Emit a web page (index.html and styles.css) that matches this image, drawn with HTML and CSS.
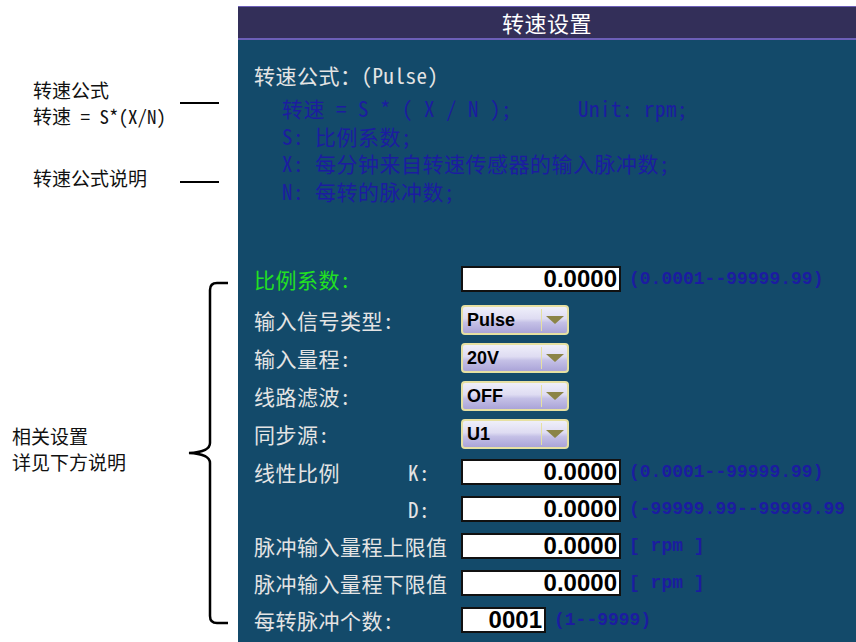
FILE: index.html
```html
<!DOCTYPE html>
<html lang="zh-CN">
<head>
  <meta charset="UTF-8" />
  <title>转速设置</title>
  <link rel="stylesheet" href="styles.css">
</head>
<body>
  <div class="sheet">
    <aside class="notes">
      <div class="note note-formula">
        <div class="note-text">
          <div>转速公式</div>
          <div>转速 = S*(X/N)</div>
        </div>
        <span class="lead"></span>
      </div>
      <div class="note note-desc">
        <div class="note-text">转速公式说明</div>
        <span class="lead"></span>
      </div>
      <div class="note note-settings">
        <div class="note-text">
          <div>相关设置</div>
          <div>详见下方说明</div>
        </div>
        <svg class="brace" width="46" height="346" viewBox="0 0 46 346">
          <path d="M43 3 L32 3 Q25 3 25 10 L25 163 Q25 172 4 173 Q25 174 25 183 L25 336 Q25 343 32 343 L43 343" fill="none" stroke="#000" stroke-width="2.5"/>
        </svg>
      </div>
    </aside>

    <main class="panel">
      <header class="title">转速设置</header>

      <section class="formula">
        <div class="formula-head">转速公式：(Pulse)</div>
        <div class="formula-body">
          <div class="formula-line">转速 = S * ( X / N );      Unit: rpm;</div>
          <div class="formula-line">S: 比例系数;</div>
          <div class="formula-line">X: 每分钟来自转速传感器的输入脉冲数;</div>
          <div class="formula-line">N: 每转的脉冲数;</div>
        </div>
      </section>

      <section class="settings">
        <div class="row row-lead">
          <div class="label label-active">比例系数:</div>
          <div class="field">0.0000</div>
          <span class="range">(0.0001--99999.99)</span>
        </div>
        <div class="row row-select">
          <div class="label">输入信号类型:</div>
          <div class="select"><span class="select-value">Pulse</span><span class="select-btn"></span></div>
        </div>
        <div class="row row-select">
          <div class="label">输入量程:</div>
          <div class="select"><span class="select-value">20V</span><span class="select-btn"></span></div>
        </div>
        <div class="row row-select">
          <div class="label">线路滤波:</div>
          <div class="select"><span class="select-value">OFF</span><span class="select-btn"></span></div>
        </div>
        <div class="row row-select">
          <div class="label">同步源:</div>
          <div class="select"><span class="select-value">U1</span><span class="select-btn"></span></div>
        </div>
        <div class="row">
          <div class="label">线性比例<span class="axis">K:</span></div>
          <div class="field">0.0000</div>
          <span class="range">(0.0001--99999.99)</span>
        </div>
        <div class="row">
          <div class="label"><span class="axis">D:</span></div>
          <div class="field">0.0000</div>
          <span class="range">(-99999.99--99999.99</span>
        </div>
        <div class="row">
          <div class="label">脉冲输入量程上限值</div>
          <div class="field">0.0000</div>
          <span class="range">[ rpm ]</span>
        </div>
        <div class="row">
          <div class="label">脉冲输入量程下限值</div>
          <div class="field">0.0000</div>
          <span class="range">[ rpm ]</span>
        </div>
        <div class="row">
          <div class="label">每转脉冲个数:</div>
          <div class="field field-short">0001</div>
          <span class="range">(1--9999)</span>
        </div>
      </section>
    </main>
  </div>
</body>
</html>
```

FILE: styles.css
```css
body {
  margin: 0;
  background: #fff;
  overflow: hidden;
}
.sheet {
  display: flex;
  width: 856px;
  height: 642px;
}

/* left-hand annotations */
.notes {
  width: 238px;
  flex: 0 0 238px;
  padding: 77px 0 0 12px;
  box-sizing: border-box;
  font-family: "Noto Sans Mono CJK SC", "Noto Sans CJK SC", sans-serif;
  font-size: 19px;
  color: #111;
}
.note {
  display: flex;
  align-items: center;
}
.note-text {
  line-height: 26px;
}
.note-formula .note-text,
.note-desc .note-text {
  width: 168px;
  padding-left: 21px;
  box-sizing: border-box;
}
.lead {
  width: 39px;
  height: 2px;
  background: #000;
}
.note-desc {
  margin-top: 36px;
}
.note-desc .lead {
  margin-top: 8px;
}
.note-settings {
  margin-top: 89px;
}
.note-settings .note-text {
  width: 173px;
  margin-bottom: 8px;
}
.brace {
  display: block;
}

/* device panel */
.panel {
  flex: 1;
  margin-top: 6px;
  background: #134a6a;
  font-family: "Noto Sans Mono CJK SC", "Noto Sans CJK SC", monospace;
  font-size: 21px;
  letter-spacing: 0.5px;
  color: #e4e4e4;
}
.title {
  height: 31px;
  line-height: 31px;
  border-top: 1px solid #6c5fb8;
  border-bottom: 2px solid #6c5fb8;
  background: #332f59;
  color: #fff;
  text-align: center;
  font-size: 22px;
}
.formula {
  padding: 21px 0 0 16px;
}
.formula-head {
  line-height: 28px;
  margin-bottom: 6px;
}
.formula-body {
  padding-left: 28px;
  color: #1c1ca0;
}
.formula-line {
  height: 27.5px;
  line-height: 27.5px;
  white-space: pre;
}

.settings {
  margin-top: 52px;
  padding-left: 16px;
}
.row {
  display: flex;
  align-items: center;
  height: 37px;
}
.row-lead {
  height: 44px;
}
.row-select {
  height: 38px;
}
.label {
  display: flex;
  width: 207px;
  flex: 0 0 207px;
  white-space: nowrap;
}
.label-active {
  color: #22e022;
}
.axis {
  margin-left: auto;
  width: 53px;
}
.field {
  width: 160px;
  height: 26px;
  box-sizing: border-box;
  border: 2px solid #111;
  background: #fff;
  color: #000;
  text-align: right;
  padding-right: 2px;
  font-family: "Liberation Sans", Arial, sans-serif;
  font-weight: bold;
  font-size: 24px;
  line-height: 22px;
  letter-spacing: 0;
}
.field-short {
  width: 85px;
}
.range {
  margin-left: 8px;
  color: #1c1ca0;
  font-family: "Liberation Mono", monospace;
  font-weight: bold;
  font-size: 18px;
  letter-spacing: 0;
  white-space: nowrap;
}

.select {
  display: flex;
  align-items: center;
  width: 108px;
  height: 30px;
  box-sizing: border-box;
  border: 2px solid #e6e0a2;
  border-radius: 4px;
  background: linear-gradient(#efeffa 0%, #dedcf2 45%, #c4c0e6 60%, #aaa4d8 100%);
}
.select-value {
  flex: 1;
  padding-left: 4px;
  color: #000;
  font-family: "Liberation Sans", Arial, sans-serif;
  font-weight: bold;
  font-size: 18px;
  letter-spacing: 0;
}
.select-btn {
  display: flex;
  align-items: center;
  justify-content: center;
  width: 25px;
  height: 22px;
  border-left: 1px solid #e6e0a2;
}
.select-btn::after {
  content: "";
  border-left: 9px solid transparent;
  border-right: 9px solid transparent;
  border-top: 8px solid #8b8446;
}
```
